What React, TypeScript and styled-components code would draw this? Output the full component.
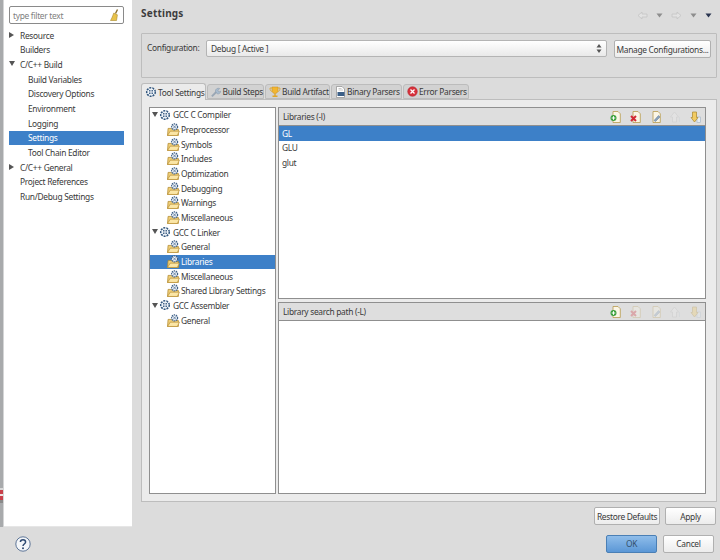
import React from 'react';
import styled, { createGlobalStyle } from 'styled-components';

const GlobalStyle = createGlobalStyle`
  html, body {
    margin: 0;
    padding: 0;
    background: #dcdcdc;
  }
  * {
    box-sizing: border-box;
  }
`;

const Window = styled.div`
  width: 720px;
  height: 560px;
  display: flex;
  flex-direction: column;
  overflow: hidden;
  background: #dcdcdc;
  color: #3a3a3a;
  font-family: 'Noto Sans', 'Open Sans', sans-serif;
  font-size: 8.4px;
  letter-spacing: -0.3px;
`;

const Body = styled.div`
  height: 527px;
  display: flex;
`;

const Strip = styled.div`
  width: 4px;
  flex: none;
  background: linear-gradient(90deg, #a8aaac 0 75%, #d4d5d6 75%);
  display: flex;
  flex-direction: column;
  justify-content: flex-end;
  padding-bottom: 24px;
`;

const StripMark = styled.div`
  height: 15px;
  width: 3px;
  background: linear-gradient(#d8d8d8 0 2px, #c8404a 2px 6px, #efe3e3 6px 8px, #c8404a 8px 12px, #8a8a8a 12px);
`;

const Sidebar = styled.nav`
  width: 128px;
  flex: none;
  background: #fff;
  padding: 6px 0 0 5px;
  border-bottom: 1px solid #e6e6e6;
`;

const Filter = styled.div`
  width: 115px;
  height: 18px;
  margin-bottom: 4px;
  display: flex;
  align-items: center;
  justify-content: space-between;
  padding: 0 3px;
  background: #fff;
  border: 1px solid #8a8a8a;
  border-radius: 2px;
  color: #808080;
`;

const NavRow = styled.div<{ $level?: number; $selected?: boolean }>`
  height: 14.67px;
  width: 115px;
  display: flex;
  align-items: center;
  padding-left: ${p => (p.$level === 1 ? 19 : 11)}px;
  background: ${p => (p.$selected ? '#3d80c8' : 'transparent')};
  color: ${p => (p.$selected ? '#fff' : '#3a3a3a')};
  position: relative;
`;

const Twisty = styled.span<{ $open?: boolean; $left: number }>`
  position: absolute;
  left: ${p => p.$left}px;
  top: 4px;
  width: 0;
  height: 0;
  ${p =>
    p.$open
      ? 'border-left: 3px solid transparent; border-right: 3px solid transparent; border-top: 5px solid #555;'
      : 'border-top: 3px solid transparent; border-bottom: 3px solid transparent; border-left: 5px solid #555;'}
`;

const Main = styled.main`
  flex: 1;
  min-width: 0;
  padding: 5px 3px 0 9px;
  display: flex;
  flex-direction: column;
`;

const TitleRow = styled.div`
  height: 15px;
  flex: none;
  display: flex;
  align-items: center;
  justify-content: space-between;
  padding-right: 5px;
`;

const Title = styled.h1`
  margin: 0;
  font-size: 10px;
  font-weight: 700;
  letter-spacing: 0.2px;
  color: #3c3c3c;
`;

const NavIcons = styled.div`
  display: flex;
  align-items: center;
  gap: 8px;
  padding-top: 6px;
`;

const ConfigBox = styled.section`
  margin-top: 13px;
  height: 45px;
  flex: none;
  padding: 6px 5px 0 5px;
  display: flex;
  align-items: flex-start;
  border: 1px solid #bdbdbd;
  border-radius: 1px;
`;

const ConfigLabel = styled.span`
  width: 59px;
  height: 17px;
  line-height: 16px;
`;

const Select = styled.div`
  width: 401px;
  height: 17px;
  padding: 0 4px;
  display: flex;
  align-items: center;
  justify-content: space-between;
  background: linear-gradient(#ffffff, #e9e9e9);
  border: 1px solid #b4b4b4;
  border-radius: 2px;
`;

const Button = styled.button<{ $primary?: boolean; $width: number }>`
  width: ${p => p.$width}px;
  height: 18px;
  padding: 0;
  white-space: nowrap;
  font: inherit;
  letter-spacing: inherit;
  color: ${p => (p.$primary ? '#33506e' : '#3a3a3a')};
  background: ${p => (p.$primary ? 'linear-gradient(#8fbdea, #5b97d6)' : 'linear-gradient(#ffffff, #ececec)')};
  border: 1px solid ${p => (p.$primary ? '#4a7fb5' : '#b0b0b0')};
  border-radius: 2px;
`;

const ManageButton = styled(Button)`
  margin-left: 7px;
`;

const TabBar = styled.div`
  margin-top: 4px;
  height: 17px;
  flex: none;
  display: flex;
  align-items: flex-end;
  gap: 1px;
`;

const Tab = styled.div<{ $active?: boolean; $width: number }>`
  width: ${p => p.$width}px;
  height: ${p => (p.$active ? 17 : 15)}px;
  padding: 0 0 0 3px;
  display: flex;
  align-items: center;
  gap: 1px;
  white-space: nowrap;
  background: ${p => (p.$active ? '#ebebeb' : '#d2d2d2')};
  border: 1px solid #bcbcbc;
  border-bottom: ${p => (p.$active ? 'none' : '1px solid #bcbcbc')};
  border-radius: 3px 3px 0 0;
  position: relative;
  z-index: ${p => (p.$active ? 1 : 0)};
  margin-bottom: ${p => (p.$active ? -1 : 0)}px;
`;

const TabPanel = styled.section`
  height: 403px;
  flex: none;
  padding: 7px 10px 7px 7px;
  display: flex;
  gap: 2px;
  background: #ebebeb;
  border: 1px solid #bdbdbd;
`;

const Tree = styled.div`
  width: 127px;
  flex: none;
  background: #fff;
  border: 1px solid #8f8f8f;
`;

const TreeRow = styled.div<{ $child?: boolean; $selected?: boolean }>`
  height: 14.67px;
  display: flex;
  align-items: center;
  gap: ${p => (p.$child ? 1 : 2)}px;
  padding-left: ${p => (p.$child ? 17 : 9)}px;
  padding-bottom: 1px;
  background: ${p => (p.$selected ? '#3d80c8' : 'transparent')};
  color: ${p => (p.$selected ? '#fff' : '#3a3a3a')};
  position: relative;
`;

const Panes = styled.div`
  flex: 1;
  min-width: 0;
  display: flex;
  flex-direction: column;
  gap: 3px;
`;

const Pane = styled.div<{ $height: number }>`
  height: ${p => p.$height}px;
  flex: none;
  display: flex;
  flex-direction: column;
  background: #fff;
  border: 1px solid #8f8f8f;
`;

const PaneHeader = styled.div`
  height: 18px;
  flex: none;
  padding: 0 4px 0 4px;
  display: flex;
  align-items: center;
  justify-content: space-between;
  background: #dedede;
  border-bottom: 1px solid #8f8f8f;
`;

const PaneTools = styled.div`
  display: flex;
  align-items: center;
  gap: 9px;
`;

const ListRow = styled.div<{ $selected?: boolean }>`
  height: 14.67px;
  display: flex;
  align-items: center;
  padding-left: 3px;
  background: ${p => (p.$selected ? '#3d80c8' : 'transparent')};
  color: ${p => (p.$selected ? '#fff' : '#3a3a3a')};
`;

const ActionRow = styled.div`
  height: 25px;
  flex: none;
  display: flex;
  justify-content: flex-end;
  align-items: center;
  gap: 5px;
  padding: 3px 1px 0 0;
`;

const Footer = styled.footer`
  height: 33px;
  flex: none;
  padding: 0 6px 0 15px;
  display: flex;
  align-items: center;
  gap: 6px;
  background: #dcdcdc;
`;

const HelpSlot = styled.div`
  flex: 1;
  display: flex;
  align-items: center;
`;

const Broom = () => (
  <svg width="11" height="13" viewBox="0 0 11 13">
    <path d="M8.5 0.5 L6.5 4.5" stroke="#8a6d2a" strokeWidth="1.4" />
    <path d="M4.8 4 L8.4 5.8 L7.5 11.5 L1.5 11.5 C2.8 9.5 3.6 7 4.8 4 Z" fill="#e8c24a" stroke="#a98a2c" strokeWidth="0.6" />
  </svg>
);

const NavArrow = ({ flip }: { flip?: boolean }) => (
  <svg width="11" height="9" viewBox="0 0 11 9" style={flip ? { transform: 'scaleX(-1)' } : undefined}>
    <path d="M1 4.5 L5 1 V3 H10 V6 H5 V8 Z" fill="#e2e2e2" stroke="#c4c4c4" strokeWidth="0.8" />
  </svg>
);

const Drop = ({ color = '#8e8e8e' }: { color?: string }) => (
  <svg width="7" height="5" viewBox="0 0 7 5">
    <path d="M0.5 0.5 H6.5 L3.5 4.5 Z" fill={color} />
  </svg>
);

const Spinner = () => (
  <svg width="6" height="11" viewBox="0 0 6 11">
    <path d="M3 1 L5.5 4.5 H0.5 Z M3 10 L0.5 6.5 H5.5 Z" fill="#555" />
  </svg>
);

const Gear = () => (
  <svg width="12" height="12" viewBox="0 0 12 12">
    <circle cx="6" cy="6" r="4.3" fill="#eef3f8" stroke="#34587f" strokeWidth="1.5" strokeDasharray="2 1" />
    <path d="M3.5 3.5 L8.5 8.5 M8.5 3.5 L3.5 8.5" stroke="#34587f" strokeWidth="0.9" />
    <circle cx="6" cy="6" r="1.4" fill="#fff" stroke="#34587f" strokeWidth="0.6" />
  </svg>
);

const FolderGear = () => (
  <svg width="13" height="13" viewBox="0 0 12 12">
    <path d="M0.5 11.5 L1 5 H4 L5 6 H10.5 V11.5 Z" fill="#f0cf79" stroke="#b38a2e" strokeWidth="0.7" />
    <path d="M0.5 11.5 L3 7.5 H11.5 L9.5 11.5 Z" fill="#fbe6a6" stroke="#b38a2e" strokeWidth="0.6" />
    <circle cx="7" cy="3.6" r="2.8" fill="#e8eef5" stroke="#3d5f86" strokeWidth="1.1" strokeDasharray="1.3 0.7" />
    <path d="M5.4 2 L8.6 5.2 M8.6 2 L5.4 5.2" stroke="#3d5f86" strokeWidth="0.6" />
  </svg>
);

const Wrench = () => (
  <svg width="12" height="12" viewBox="0 0 12 12">
    <path d="M1 11 L6 6" stroke="#9aa7b5" strokeWidth="2.2" />
    <path d="M5 5 C5 2.5 7.5 1 10 2 L8 4 L9 6 L11 5 C11 8 8 9 6.5 7.5 Z" fill="#a9bccf" stroke="#7d8ea0" strokeWidth="0.5" />
  </svg>
);

const Trophy = () => (
  <svg width="12" height="12" viewBox="0 0 12 12">
    <path d="M3 1 H9 V4.5 C9 6.5 7.5 7.5 6 7.5 C4.5 7.5 3 6.5 3 4.5 Z" fill="#f2b632" stroke="#c98f1c" strokeWidth="0.5" />
    <path d="M3 2 H1 C1 4.5 2 5.5 3.5 5.5 M9 2 H11 C11 4.5 10 5.5 8.5 5.5" fill="none" stroke="#e0a62b" strokeWidth="0.9" />
    <path d="M5.3 7.5 H6.7 V9.5 H8.5 V11 H3.5 V9.5 H5.3 Z" fill="#e0a62b" />
  </svg>
);

const BinaryDoc = () => (
  <svg width="11" height="12" viewBox="0 0 11 12">
    <path d="M1.5 0.5 H7 L9.5 3 V11.5 H1.5 Z" fill="#fff" stroke="#8d8d8d" strokeWidth="0.7" />
    <rect x="2.5" y="6" width="7" height="4" fill="#3c5f87" />
    <path d="M3.5 2.5 H6.5 M3.5 4 H8" stroke="#a8a8a8" strokeWidth="0.6" />
  </svg>
);

const ErrorIcon = () => (
  <svg width="11" height="11" viewBox="0 0 11 11">
    <circle cx="5.5" cy="5.5" r="4.8" fill="#d8323c" stroke="#a62028" strokeWidth="0.5" />
    <path d="M3.5 3.5 L7.5 7.5 M7.5 3.5 L3.5 7.5" stroke="#fff" strokeWidth="1.3" />
  </svg>
);

const DocBase = ({ dim, children }: { dim?: boolean; children: React.ReactNode }) => (
  <svg width="11" height="12" viewBox="0 0 11 12" style={dim ? { opacity: 0.3 } : undefined}>
    <path d="M3 0.5 H8 L10.3 2.8 V11.5 H3 Z" fill="#fbf6e6" stroke="#b79a4e" strokeWidth="0.8" />
    {children}
  </svg>
);

const AddDoc = () => (
  <DocBase>
    <circle cx="3.5" cy="7" r="3" fill="#3ba03b" />
    <path d="M1.7 7 H5.3 M3.5 5.2 V8.8" stroke="#fff" strokeWidth="1" />
  </DocBase>
);

const RemoveDoc = ({ dim }: { dim?: boolean }) => (
  <DocBase dim={dim}>
    <path d="M1 5 L6 10 M6 5 L1 10" stroke="#d22a35" strokeWidth="2" />
  </DocBase>
);

const EditDoc = ({ dim }: { dim?: boolean }) => (
  <DocBase dim={dim}>
    <path d="M4 9.5 L8.5 4.5 L10 6 L5.5 10.5 Z" fill="#8aa2bd" stroke="#5f7895" strokeWidth="0.5" />
  </DocBase>
);

const UpArrow = ({ dim }: { dim?: boolean }) => (
  <svg width="11" height="12" viewBox="0 0 11 12" style={dim ? { opacity: 0.35 } : undefined}>
    <path d="M4.5 1 L8.5 6 H6.5 V11 H2.5 V6 H0.5 Z" fill="#ececec" stroke="#bcbcbc" strokeWidth="0.8" />
    <path d="M9.5 6 V11" stroke="#c8d0d8" strokeWidth="1" />
  </svg>
);

const DownArrow = ({ dim }: { dim?: boolean }) => (
  <svg width="11" height="12" viewBox="0 0 11 12" style={dim ? { opacity: 0.3 } : undefined}>
    <rect x="7" y="6" width="3.5" height="5.5" fill="#e6ecf3" stroke="#9fb0c2" strokeWidth="0.6" />
    <path d="M4.5 11 L8 6.5 H6.5 V1 H2.5 V6.5 H1 Z" fill="#f2cb62" stroke="#b08f3a" strokeWidth="0.8" />
  </svg>
);

const Help = () => (
  <svg width="16" height="16" viewBox="0 0 16 16">
    <circle cx="8" cy="8" r="7.2" fill="#f4f6f9" stroke="#4f6a8f" strokeWidth="0.9" />
    <path d="M5.4 6 C5.4 2.9 10.6 2.9 10.6 6 C10.6 8 8 8 8 10" fill="none" stroke="#2f4a72" strokeWidth="1.5" />
    <circle cx="8" cy="12.2" r="1" fill="#2f4a72" />
  </svg>
);

const navItems: { label: string; level?: number; twisty?: 'open' | 'closed'; selected?: boolean }[] = [
  { label: 'Resource', twisty: 'closed' },
  { label: 'Builders' },
  { label: 'C/C++ Build', twisty: 'open' },
  { label: 'Build Variables', level: 1 },
  { label: 'Discovery Options', level: 1 },
  { label: 'Environment', level: 1 },
  { label: 'Logging', level: 1 },
  { label: 'Settings', level: 1, selected: true },
  { label: 'Tool Chain Editor', level: 1 },
  { label: 'C/C++ General', twisty: 'closed' },
  { label: 'Project References' },
  { label: 'Run/Debug Settings' },
];

const treeItems: { label: string; root?: boolean; selected?: boolean }[] = [
  { label: 'GCC C Compiler', root: true },
  { label: 'Preprocessor' },
  { label: 'Symbols' },
  { label: 'Includes' },
  { label: 'Optimization' },
  { label: 'Debugging' },
  { label: 'Warnings' },
  { label: 'Miscellaneous' },
  { label: 'GCC C Linker', root: true },
  { label: 'General' },
  { label: 'Libraries', selected: true },
  { label: 'Miscellaneous' },
  { label: 'Shared Library Settings' },
  { label: 'GCC Assembler', root: true },
  { label: 'General' },
];

const App: React.FC = () => (
  <Window>
    <GlobalStyle />
    <Body>
      <Strip>
        <StripMark />
      </Strip>
      <Sidebar>
        <Filter>
          type filter text
          <Broom />
        </Filter>
        {navItems.map(item => (
          <NavRow key={item.label} $level={item.level} $selected={item.selected}>
            {item.twisty && <Twisty $left={0} $open={item.twisty === 'open'} />}
            {item.label}
          </NavRow>
        ))}
      </Sidebar>
      <Main>
        <TitleRow>
          <Title>Settings</Title>
          <NavIcons>
            <NavArrow />
            <Drop />
            <NavArrow flip />
            <Drop />
            <Drop color="#2a3550" />
          </NavIcons>
        </TitleRow>
        <ConfigBox>
          <ConfigLabel>Configuration:</ConfigLabel>
          <Select>
            Debug [ Active ]
            <Spinner />
          </Select>
          <ManageButton $width={97}>Manage Configurations...</ManageButton>
        </ConfigBox>
        <TabBar>
          <Tab $active $width={65}>
            <Gear />
            Tool Settings
          </Tab>
          <Tab $width={57}>
            <Wrench />
            Build Steps
          </Tab>
          <Tab $width={65}>
            <Trophy />
            Build Artifact
          </Tab>
          <Tab $width={71}>
            <BinaryDoc />
            Binary Parsers
          </Tab>
          <Tab $width={66}>
            <ErrorIcon />
            Error Parsers
          </Tab>
        </TabBar>
        <TabPanel>
          <Tree>
            {treeItems.map((item, i) => (
              <TreeRow key={i} $child={!item.root} $selected={item.selected}>
                {item.root && <Twisty $left={2} $open />}
                {item.root ? <Gear /> : <FolderGear />}
                <span>{item.label}</span>
              </TreeRow>
            ))}
          </Tree>
          <Panes>
            <Pane $height={192}>
              <PaneHeader>
                Libraries (-l)
                <PaneTools>
                  <AddDoc />
                  <RemoveDoc />
                  <EditDoc />
                  <UpArrow dim />
                  <DownArrow />
                </PaneTools>
              </PaneHeader>
              <ListRow $selected>GL</ListRow>
              <ListRow>GLU</ListRow>
              <ListRow>glut</ListRow>
            </Pane>
            <Pane $height={192}>
              <PaneHeader>
                Library search path (-L)
                <PaneTools>
                  <AddDoc />
                  <RemoveDoc dim />
                  <EditDoc dim />
                  <UpArrow dim />
                  <DownArrow dim />
                </PaneTools>
              </PaneHeader>
            </Pane>
          </Panes>
        </TabPanel>
        <ActionRow>
          <Button $width={66}>Restore Defaults</Button>
          <Button $width={51}>Apply</Button>
        </ActionRow>
      </Main>
    </Body>
    <Footer>
      <HelpSlot>
        <Help />
      </HelpSlot>
      <Button $primary $width={51}>OK</Button>
      <Button $width={51}>Cancel</Button>
    </Footer>
  </Window>
);

export default App;
